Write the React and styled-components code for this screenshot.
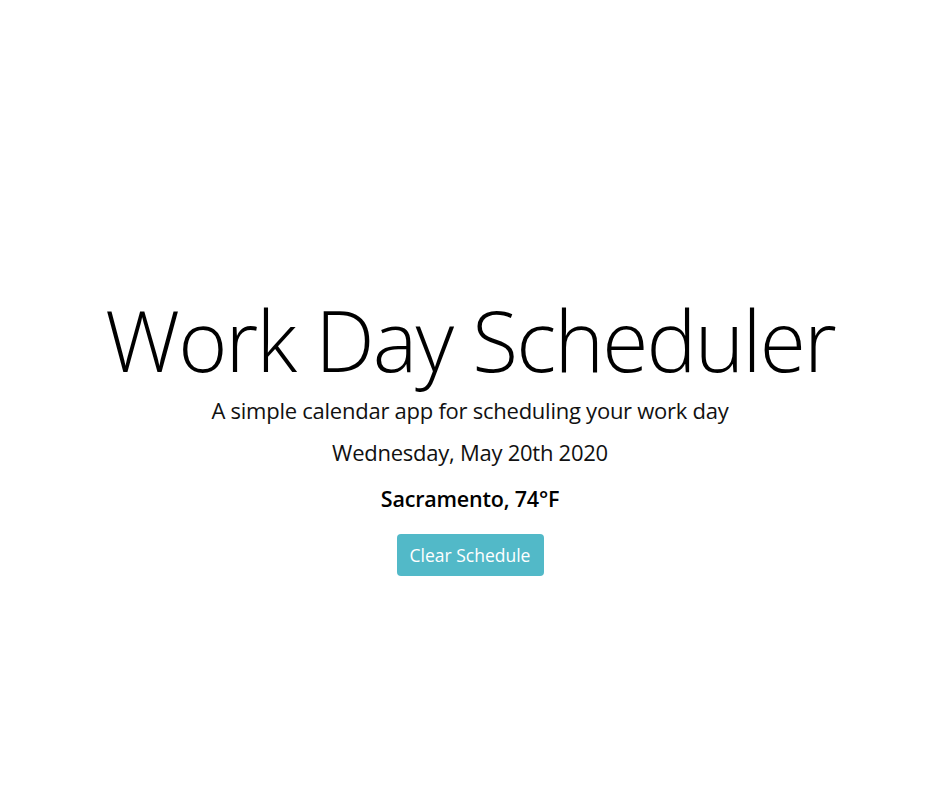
import React from 'react'
import styled, { createGlobalStyle } from 'styled-components'

const GlobalStyle = createGlobalStyle`
  body {
    margin: 0;
    background: #fff;
    font-family: "Open Sans", "Liberation Sans", sans-serif;
    color: #212529;
  }
`

const Jumbotron = styled.header`
  display: flex;
  flex-direction: column;
  align-items: center;
  text-align: center;
  padding-top: 290px;
`

const Title = styled.h1`
  margin: 0;
  font-size: 84px;
  font-weight: 300;
  line-height: 1.2;
  color: #000;
  letter-spacing: -1.8px;
`

const Lead = styled.p`
  margin: ${props => props.gap || 0}px 0 0;
  font-size: 22px;
  font-weight: 400;
  line-height: 1.2;
  color: #111;
  letter-spacing: ${props => props.tight || 0}px;
`

const Weather = styled.h5`
  margin: 20px 0 0;
  font-size: 21.5px;
  font-weight: 600;
  line-height: 1.2;
  color: #000;
  letter-spacing: -0.2px;
`

const ClearButton = styled.button`
  margin-top: 23px;
  width: 147px;
  height: 42px;
  border: none;
  border-radius: 4px;
  background: #52b9c8;
  color: #fff;
  font-family: inherit;
  font-size: 17.5px;
  cursor: pointer;
`

const App = () => {
  return (
    <>
      <GlobalStyle />
      <Jumbotron>
        <Title>Work Day Scheduler</Title>
        <Lead gap={6.5} tight={-0.25}>A simple calendar app for scheduling your work day</Lead>
        <Lead gap={15.5} tight={-0.25}>Wednesday, May 20th 2020</Lead>
        <Weather>Sacramento, 74°F</Weather>
        <ClearButton>Clear Schedule</ClearButton>
      </Jumbotron>
    </>
  )
}

export default App
